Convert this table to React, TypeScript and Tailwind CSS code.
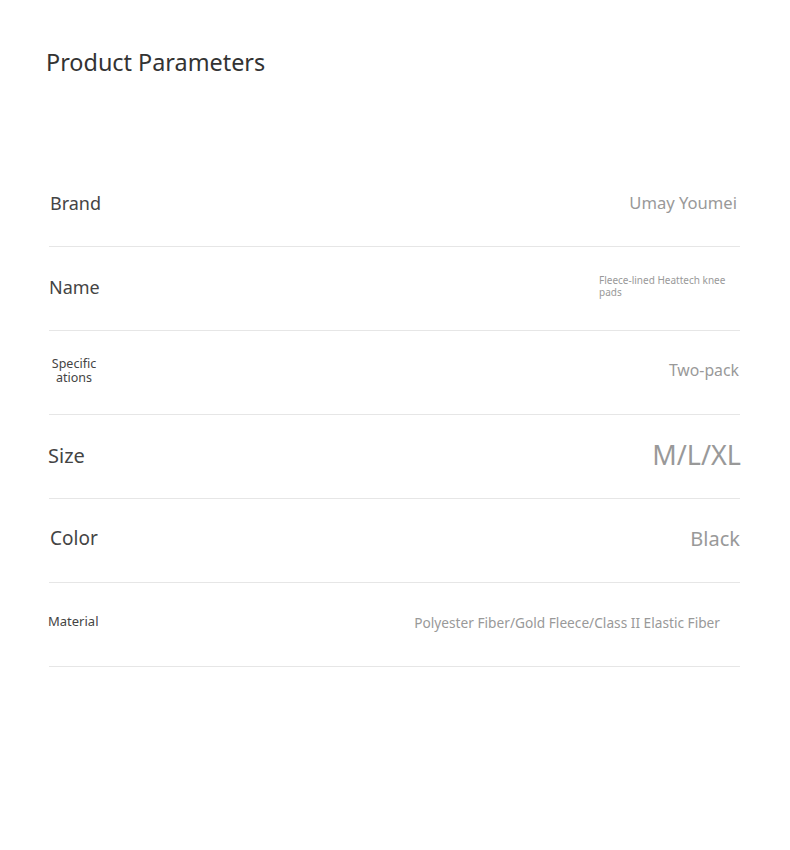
const font = { fontFamily: '"Noto Sans", "Open Sans", Arial, sans-serif' };

type Row = {
  label: React.ReactNode;
  labelClass: string;
  value: React.ReactNode;
  valueClass: string;
};

const rows: Row[] = [
  {
    label: "Brand",
    labelClass: "pl-[1px] text-[18px] mt-[-2px]",
    value: "Umay Youmei",
    valueClass: "pr-[3px] text-[16.6px] mt-[-2px]",
  },
  {
    label: "Name",
    labelClass: "text-[18px] mt-[-2px]",
    value: (
      <span className="block w-[141px] text-left text-[10px] leading-[12px]">
        Fleece-lined Heattech knee pads
      </span>
    ),
    valueClass: "mt-[-6px]",
  },
  {
    label: (
      <span className="block w-[50px] text-center text-[12.5px] leading-[14px]">
        Specific
        <br />
        ations
      </span>
    ),
    labelClass: "mt-[-3px]",
    value: "Two-pack",
    valueClass: "pr-[1px] text-[15.8px] mt-[-3px]",
  },
  {
    label: "Size",
    labelClass: "ml-[-1px] text-[20px] mt-[-2px]",
    value: "M/L/XL",
    valueClass: "mr-[-1px] text-[27px] mt-[-2px]",
  },
  {
    label: "Color",
    labelClass: "pl-[1px] text-[19px] mt-[-4px]",
    value: "Black",
    valueClass: "text-[20px] mt-[-4px]",
  },
  {
    label: "Material",
    labelClass: "ml-[-1px] text-[13px] mt-[-5px]",
    value: "Polyester Fiber/Gold Fleece/Class II Elastic Fiber",
    valueClass: "pr-[20px] text-[13.7px] mt-[-3px]",
  },
];

export default function App() {
  return (
    <div className="min-h-[850px] w-[790px] bg-white" style={font}>
      <div className="px-[46px] pt-[44px]">
        <h1 className="text-[23.4px] font-normal leading-[36px] text-[#333]">
          Product Parameters
        </h1>
      </div>
      <div className="ml-[49px] mr-[50px] mt-[83px] flex flex-col">
        {rows.map((r, i) => (
          <div
            key={i}
            className="flex h-[84px] items-center justify-between border-b border-[#e6e6e6]"
          >
            <div className={`text-[#444] ${r.labelClass}`}>{r.label}</div>
            <div className={`text-right text-[#999] ${r.valueClass}`}>{r.value}</div>
          </div>
        ))}
      </div>
    </div>
  );
}
